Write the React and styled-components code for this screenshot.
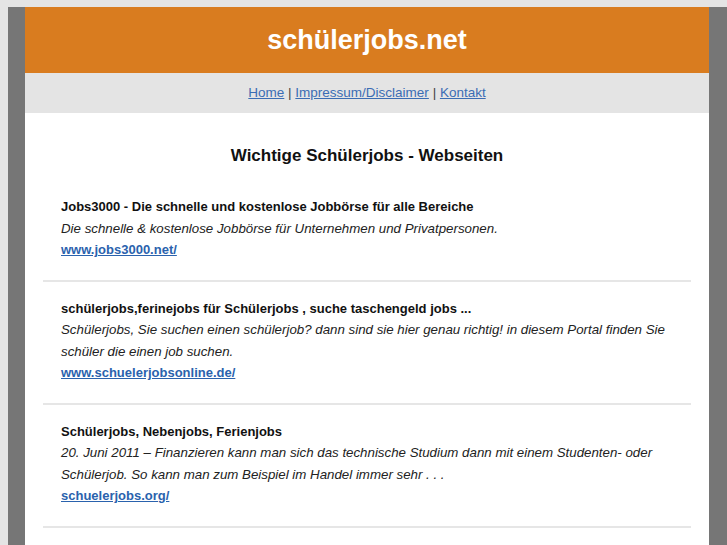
import styled, { createGlobalStyle } from 'styled-components'

const GlobalStyle = createGlobalStyle`
    html, body {
        margin: 0;
        padding: 0;
        background: #e4e4e4;
        font-family: "Liberation Sans", Arial, sans-serif;
    }
`

const sites = [
    {
        title: 'Jobs3000 - Die schnelle und kostenlose Jobbörse für alle Bereiche',
        text: 'Die schnelle & kostenlose Jobbörse für Unternehmen und Privatpersonen.',
        url: 'www.jobs3000.net/',
    },
    {
        title: 'schülerjobs,ferinejobs für Schülerjobs , suche taschengeld jobs ...',
        text: 'Schülerjobs, Sie suchen einen schülerjob? dann sind sie hier genau richtig! in diesem Portal finden Sie schüler die einen job suchen.',
        url: 'www.schuelerjobsonline.de/',
    },
    {
        title: 'Schülerjobs, Nebenjobs, Ferienjobs',
        text: '20. Juni 2011 – Finanzieren kann man sich das technische Studium dann mit einem Studenten- oder Schülerjob. So kann man zum Beispiel im Handel immer sehr . . .',
        url: 'schuelerjobs.org/',
    },
]

const App = () => {
    return (
        <>
            <GlobalStyle />
            <Page>
                <Frame>
                    <Header>schülerjobs.net</Header>
                    <Nav>
                        <a href="#">Home</a> | <a href="#">Impressum/Disclaimer</a> |{' '}
                        <a href="#">Kontakt</a>
                    </Nav>
                    <Content>
                        <Heading>Wichtige Schülerjobs - Webseiten</Heading>
                        {sites.map((site) => (
                            <Entry key={site.url}>
                                <EntryTitle>{site.title}</EntryTitle>
                                <EntryText>{site.text}</EntryText>
                                <EntryLink href="#">{site.url}</EntryLink>
                            </Entry>
                        ))}
                    </Content>
                </Frame>
            </Page>
        </>
    )
}

export default App

const Page = styled.div`
    padding: 7px 0 0 8px;
    height: 545px;
    box-sizing: border-box;
    overflow: hidden;
`
const Frame = styled.div`
    background: #767676;
    padding: 0 18px 0 17px;
    min-height: 100%;
`
const Header = styled.h1`
    margin: 0;
    height: 66px;
    background: #d97c1f;
    color: #fff;
    font-size: 27px;
    font-weight: bold;
    text-align: center;
    line-height: 66px;
`
const Nav = styled.div`
    height: 40px;
    line-height: 39px;
    background: #e4e4e4;
    text-align: center;
    font-size: 13.5px;
    color: #444;

    a {
        color: #3b6db4;
        text-decoration: underline;
    }
`
const Content = styled.div`
    background: #fff;
    padding: 31px 18px 20px;
    min-height: 600px;
`
const Heading = styled.h2`
    margin: 0 0 12px;
    font-size: 17px;
    font-weight: bold;
    text-align: center;
    color: #111;
    line-height: 24px;
`
const Entry = styled.div`
    display: flex;
    flex-direction: column;
    align-items: flex-start;
    padding: 16px 18px 19px;
    border-bottom: 2px solid #e6e6e6;
    font-size: 13px;
    line-height: 21.5px;
    color: #111;
`
const EntryTitle = styled.div`
    font-weight: bold;
`
const EntryText = styled.div`
    font-style: italic;
    font-size: 13.3px;
    color: #222;
`
const EntryLink = styled.a`
    font-weight: bold;
    color: #2a62ad;
    text-decoration: underline;
`
